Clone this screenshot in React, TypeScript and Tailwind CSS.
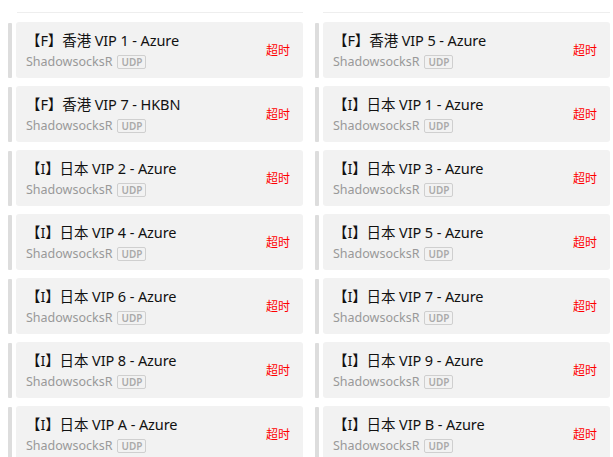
import React from 'react';

const nodes = [
  '【F】香港 VIP 1 - Azure',
  '【F】香港 VIP 5 - Azure',
  '【F】香港 VIP 7 - HKBN',
  '【I】日本 VIP 1 - Azure',
  '【I】日本 VIP 2 - Azure',
  '【I】日本 VIP 3 - Azure',
  '【I】日本 VIP 4 - Azure',
  '【I】日本 VIP 5 - Azure',
  '【I】日本 VIP 6 - Azure',
  '【I】日本 VIP 7 - Azure',
  '【I】日本 VIP 8 - Azure',
  '【I】日本 VIP 9 - Azure',
  '【I】日本 VIP A - Azure',
  '【I】日本 VIP B - Azure',
];

const NodeItem = ({ name }: { name: string }) => (
  <div className="flex h-[56px] gap-[4px]">
    <div className="w-[4px] mt-[1px] bg-[#dddddd] rounded-[1px]" />
    <div className="flex-1 flex items-center bg-[#f2f2f2] rounded-[3px] pl-[10px] pr-[13px]">
      <div className="flex-1 flex flex-col -mt-[1px]">
        <div className="text-[14.5px] leading-[22px] text-[#111] tracking-[-0.1px]">{name}</div>
        <div className="flex items-center gap-[5px] leading-[18px] mt-[2px]">
          <span className="text-[12.5px] text-[#999]">ShadowsocksR</span>
          <span className="text-[10px] leading-[10px] font-semibold text-[#aaa] border border-[#cfcfcf] rounded-[2px] px-[3px] py-[1px]">
            UDP
          </span>
        </div>
      </div>
      <div className="text-[12px] text-[#f00] pt-[2px]">超时</div>
    </div>
  </div>
);

const App = () => {
  return (
    <div
      className="w-[613px] h-[457px] overflow-hidden bg-white"
      style={{ fontFamily: '"Noto Sans", "Noto Sans CJK SC", sans-serif' }}
    >
      <div className="grid grid-cols-2 gap-x-[12px] pl-[8px] pr-[3px] pt-[12px]">
        <div className="ml-[9px] h-[1px] bg-[#eeeeee] mb-[9px]" />
        <div className="ml-[8px] h-[1px] bg-[#eeeeee] mb-[9px]" />
      </div>
      <div className="grid grid-cols-2 gap-x-[12px] gap-y-[8px] pl-[8px] pr-[3px]">
        {nodes.map((n, i) => (
          <NodeItem key={i} name={n} />
        ))}
      </div>
    </div>
  );
};

export default App;
